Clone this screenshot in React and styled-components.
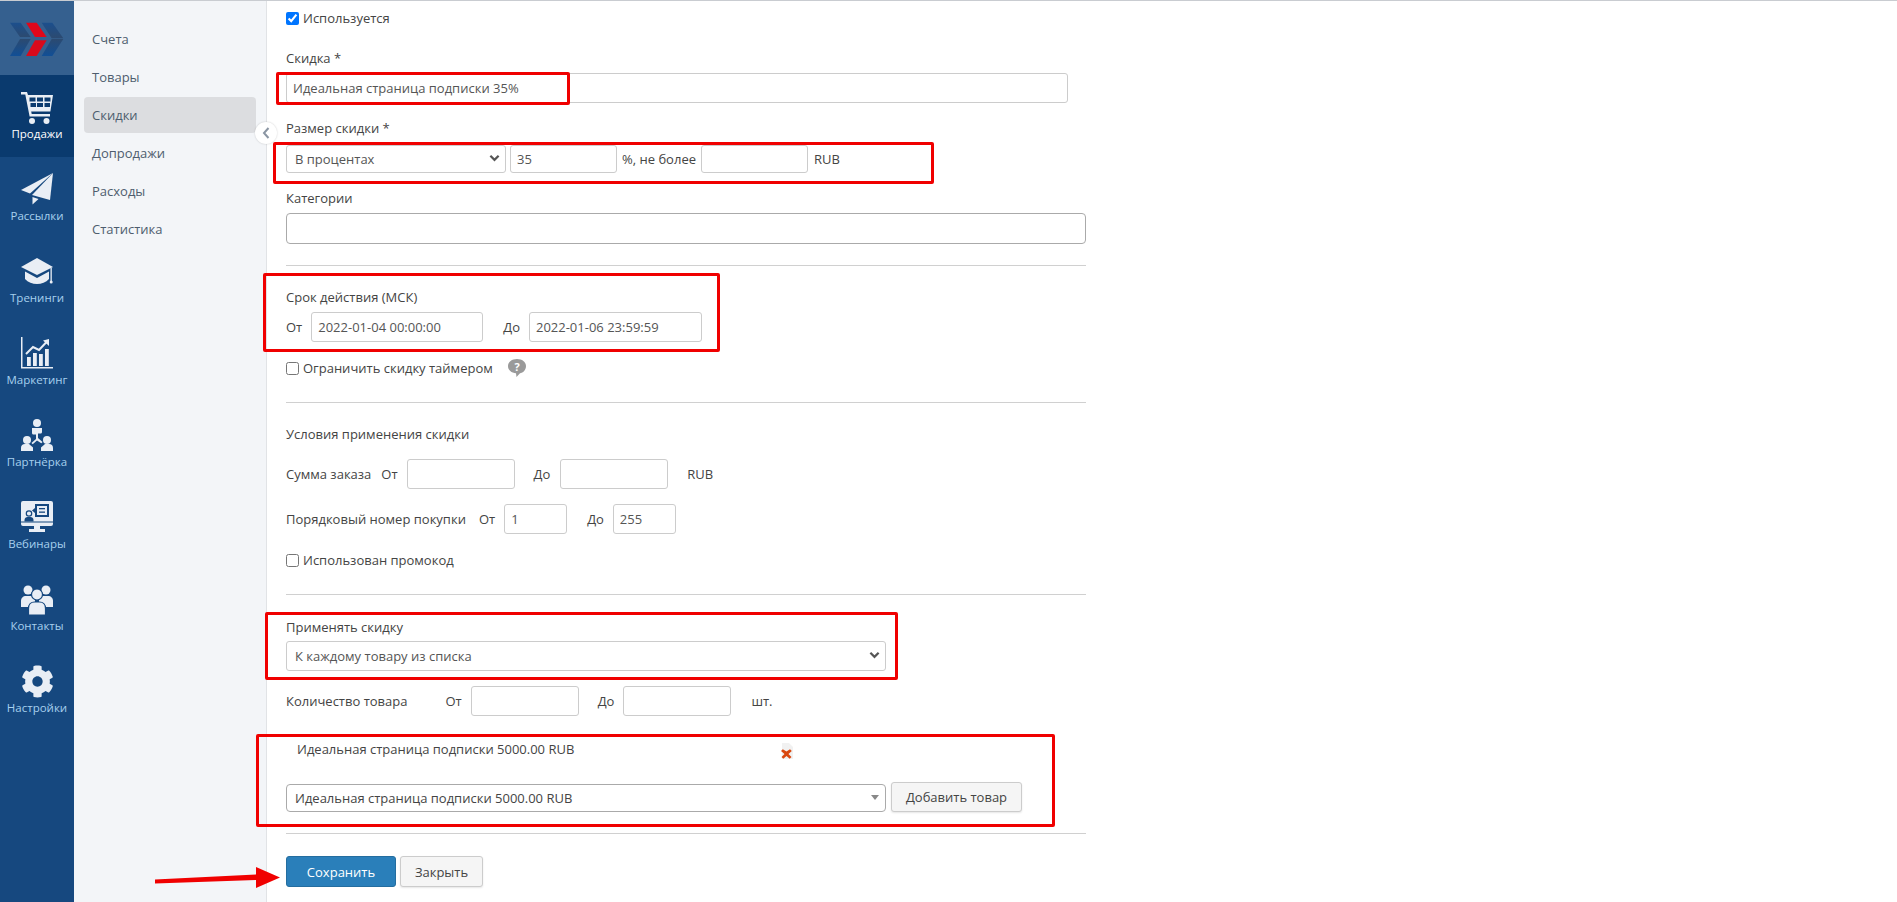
import React from 'react'
import styled, { createGlobalStyle } from 'styled-components'
import { FaCog } from 'react-icons/fa'

const GlobalStyle = createGlobalStyle`
  html, body {
    margin: 0;
    padding: 0;
    background: #fff;
    font-family: "Open Sans", "Liberation Sans", sans-serif;
    font-size: 13px;
    color: #444;
  }
  * { box-sizing: border-box; }
`

const Logo = () => (
  <svg width="74" height="75" viewBox="0 0 222 225">
    <defs>
      <linearGradient id="topBlue" x1="0" y1="0" x2="0" y2="1">
        <stop offset="0" stopColor="#1c4f8d" />
        <stop offset="1" stopColor="#2c4a70" />
      </linearGradient>
      <linearGradient id="botBlue" x1="0" y1="0" x2="0" y2="1">
        <stop offset="0" stopColor="#2c4a70" />
        <stop offset="1" stopColor="#114f96" />
      </linearGradient>
    </defs>
    <polygon points="30,65 62,65 92,108 60,108" fill="url(#topBlue)" />
    <polygon points="60,114 92,114 62,165 30,165" fill="url(#botBlue)" />
    <polygon points="125,65 157,65 190,112 155,112" fill="url(#topBlue)" />
    <polygon points="155,114 190,114 157,165 125,165" fill="url(#botBlue)" />
    <polygon points="78,65 110,65 140,108 105,108" fill="#e1071a" />
    <polygon points="105,118 140,118 110,165 78,165" fill="#d80a1c" />
  </svg>
)

const CartIcon = () => (
  <svg width="32" height="32" viewBox="0 0 32 32" fill="currentColor">
    <path d="M0 0h6l1 3h25l-2.6 16.5H10.2l.5 2.5H29v2.4H8.6L4.3 2.4H0z" />
    <g fill="#0a3a6e">
      <rect x="8.5" y="5.5" width="6" height="4" />
      <rect x="16" y="5.5" width="6" height="4" />
      <rect x="23.5" y="5.5" width="6" height="4" />
      <rect x="9.5" y="11" width="5.5" height="4" />
      <rect x="16" y="11" width="6" height="4" />
      <rect x="23.5" y="11" width="5.5" height="4" />
    </g>
    <circle cx="11" cy="29" r="3" />
    <circle cx="25.5" cy="29" r="3" />
  </svg>
)

const PlaneIcon = () => (
  <svg width="32" height="32" viewBox="0 0 32 32" fill="currentColor">
    <polygon points="32,0 0,17 9,20.5" />
    <polygon points="32,0 11,22 29,27" />
    <polygon points="11.5,24 11.5,31.5 17.5,26" />
  </svg>
)

const CapIcon = () => (
  <svg width="32" height="28" viewBox="0 0 32 28" fill="currentColor">
    <polygon points="0,9 16,0 32,9 16,17" />
    <path d="M4 13.5 16 20l12-6.5V21c-3 3.5-7.5 5-12 5s-9-1.500-12-5z" />
    <rect x="29.500" y="10" width="1.300" height="13" />
    <circle cx="30.200" cy="24" r="1.500" />
  </svg>
)

const ChartIcon = () => (
  <svg width="32" height="32" viewBox="0 0 32 32" fill="currentColor">
    <path d="M0 0h1.500v30H32v1.600H0z" />
    <rect x="6" y="20" width="3.800" height="9" />
    <rect x="12" y="16" width="3.800" height="13" />
    <rect x="18" y="17" width="3.800" height="12" />
    <rect x="24" y="12" width="3.800" height="17" />
    <path d="M5 17l7-7 6 3 8-8.500" fill="none" stroke="currentColor" strokeWidth="2" />
    <polygon points="28,2 28,9 22,3.500" />
  </svg>
)

const PartnerIcon = () => (
  <svg width="32" height="33" viewBox="0 0 32 33" fill="currentColor">
    <circle cx="16" cy="4" r="4" />
    <path d="M11 9h10v4c0 .8-.5 1.500-1.500 1.500H17v4.500l4.500 4-1.200 1.300L16 21.500l-4.300 3.800-1.200-1.300 4.500-4v-4.500h-2.500c-1 0-1.500-.7-1.500-1.500z" />
    <circle cx="6" cy="21" r="4" />
    <path d="M0 32v-3c0-2.500 1.500-4 4-4h4l4 3.500V32z" />
    <circle cx="26" cy="21" r="4" />
    <path d="M32 32v-3c0-2.500-1.500-4-4-4h-4l-4 3.500V32z" />
  </svg>
)

const WebinarIcon = () => (
  <svg width="32" height="32" viewBox="0 0 32 32">
    <path d="M2 0h28a2 2 0 0 1 2 2v21a2 2 0 0 1-2 2H19v3h5v3H8v-3h5v-3H2a2 2 0 0 1-2-2V2a2 2 0 0 1 2-2z" fill="currentColor" />
    <rect x="0" y="20.500" width="32" height="1" fill="#16487f" />
    <path d="M14 3h14v13H14v-4l-3-2.500 3-2.500z" fill="#16487f" />
    <path d="M16 5h10v9H16z" fill="currentColor" />
    <rect x="18" y="7" width="6" height="1.300" fill="#16487f" />
    <rect x="18" y="10.500" width="6" height="1.300" fill="#16487f" />
    <circle cx="8" cy="12.500" r="2.700" fill="none" stroke="#16487f" strokeWidth="1.200" />
    <path d="M3.500 20.500v-1.500c0-2 1.500-3 3-3h3c1.500 0 3 1 3 3v1.500z" fill="#16487f" />
  </svg>
)

const ContactsIcon = () => (
  <svg width="32" height="30" viewBox="0 0 32 30">
    <g fill="currentColor">
      <circle cx="7" cy="5" r="4.500" />
      <circle cx="25" cy="5" r="4.500" />
      <path d="M0 22v-6c0-3 2-5 5-5h4c3 0 5 2 5 5v6z" />
      <path d="M18 22v-6c0-3 2-5 5-5h4c3 0 5 2 5 5v6z" />
      <circle cx="16" cy="9.500" r="5.500" stroke="#16487f" strokeWidth="1.200" />
      <path d="M7.500 30v-6.500c0-4 2.500-6.500 6-6.500h5c3.500 0 6 2.500 6 6.500V30z" stroke="#16487f" strokeWidth="1.200" />
    </g>
  </svg>
)

const HelpBubble = () => (
  <svg width="18" height="18" viewBox="0 0 18 18">
    <path d="M9 0c5 0 9 2.800 9 7s-3 6.800-6 7.300L8.500 18l-.5-3.700C3.500 14 0 11.200 0 7s4-7 9-7z" fill="#9a9a9a" />
    <text x="9" y="11.500" textAnchor="middle" fontSize="11" fontWeight="700" fontFamily="Open Sans" fill="#fff">?</text>
  </svg>
)

const DeleteIcon = () => (
  <svg width="16" height="16" viewBox="0 0 16 16">
    <path d="M3 0h7l4 4v12H3z" fill="#f1f1f1" />
    <path d="M2 8l1.800-1.800L7.500 8.500 11 6.200 12.800 8 9.500 11l3 3-1.800 1.800L7.500 13l-3.200 2.800L2.500 14l3-3z" fill="#d9480f" />
  </svg>
)

const navItems = [
  { label: 'Продажи', icon: <CartIcon />, active: true, offset: 1 },
  { label: 'Рассылки', icon: <PlaneIcon />, offset: 0 },
  { label: 'Тренинги', icon: <CapIcon />, offset: 3 },
  { label: 'Маркетинг', icon: <ChartIcon />, offset: 0 },
  { label: 'Партнёрка', icon: <PartnerIcon />, offset: 0 },
  { label: 'Вебинары', icon: <WebinarIcon />, offset: 0 },
  { label: 'Контакты', icon: <ContactsIcon />, offset: 2 },
  { label: 'Настройки', icon: <FaCog size={33} />, offset: 0 },
]

const subItems = ['Счета', 'Товары', 'Скидки', 'Допродажи', 'Расходы', 'Статистика']

const SelectField = ({ value, width, height }) => (
  <SelectWrap $width={width}>
    <NativeSelect $height={height} defaultValue={value}>
      <option>{value}</option>
    </NativeSelect>
    <Chevron width="11" height="8" viewBox="0 0 12 8">
      <path d="M1.500 1.500 6 6l4.500-4.500" fill="none" stroke="#555" strokeWidth="2.400" />
    </Chevron>
  </SelectWrap>
)

const App = () => {
  return (
    <Page>
      <GlobalStyle />
      <Sidebar>
        <LogoBox><Logo /></LogoBox>
        {navItems.map((item) => (
          <NavItem key={item.label} $active={item.active}>
            <NavIcon $offset={item.offset}>{item.icon}</NavIcon>
            <NavLabel $active={item.active}>{item.label}</NavLabel>
          </NavItem>
        ))}
      </Sidebar>

      <SubMenu>
        {subItems.map((item) => (
          <SubItem key={item} $active={item === 'Скидки'}>{item}</SubItem>
        ))}
        <Collapse>
          <svg width="8" height="12" viewBox="0 0 8 12">
            <path d="M6.500 1 2 6l4.500 5" fill="none" stroke="#8a95a3" strokeWidth="2" />
          </svg>
        </Collapse>
      </SubMenu>

      <Main>
        <Form>
          <CheckRow $mt={7}>
            <Check type="checkbox" defaultChecked />
            Используется
          </CheckRow>

          <Label $mt={21}>Скидка *</Label>
          <TextInput $mt={6} $width={782} defaultValue="Идеальная страница подписки 35%" />

          <Label $mt={16}>Размер скидки *</Label>
          <Row $mt={8}>
            <SelectField value="В процентах" width={220} height={28} />
            <SmallInput $width={107} $ml={4} defaultValue="35" />
            <RowText $ml={5}>%, не более</RowText>
            <SmallInput $width={107} $ml={5} />
            <RowText $ml={6}>RUB</RowText>
          </Row>

          <Label $mt={16}>Категории</Label>
          <CategoryBox $mt={6} />

          <Divider $mt={21} />

          <Label $mt={22}>Срок действия (МСК)</Label>
          <Row $mt={6}>
            <RowText>От</RowText>
            <TextInput $width={172} $ml={9} defaultValue="2022-01-04 00:00:00" />
            <RowText $ml={20}>До</RowText>
            <TextInput $width={173} $ml={9} defaultValue="2022-01-06 23:59:59" />
          </Row>

          <CheckRow $mt={16}>
            <Check type="checkbox" />
            Ограничить скидку таймером
            <HelpWrap><HelpBubble /></HelpWrap>
          </CheckRow>

          <Divider $mt={24} />

          <Label $mt={22}>Условия применения скидки</Label>
          <Row $mt={16}>
            <RowText>Сумма заказа</RowText>
            <RowText $ml={10}>От</RowText>
            <TextInput $width={108} $ml={9} />
            <RowText $ml={19}>До</RowText>
            <TextInput $width={108} $ml={10} />
            <RowText $ml={19}>RUB</RowText>
          </Row>
          <Row $mt={15}>
            <RowText>Порядковый номер покупки</RowText>
            <RowText $ml={13}>От</RowText>
            <TextInput $width={63} $ml={9} defaultValue="1" />
            <RowText $ml={20}>До</RowText>
            <TextInput $width={63} $ml={9} defaultValue="255" />
          </Row>

          <CheckRow $mt={16}>
            <Check type="checkbox" />
            Использован промокод
          </CheckRow>

          <Divider $mt={24} />

          <Label $mt={23}>Применять скидку</Label>
          <SelectRow $mt={5}>
            <SelectField value="К каждому товару из списка" width={600} height={30} />
          </SelectRow>

          <Row $mt={15}>
            <RowText>Количество товара</RowText>
            <RowText $ml={38}>От</RowText>
            <TextInput $width={108} $ml={9} />
            <RowText $ml={19}>До</RowText>
            <TextInput $width={108} $ml={9} />
            <RowText $ml={20}>шт.</RowText>
          </Row>

          <ProductRow>
            <span>Идеальная страница подписки 5000.00 RUB</span>
            <DeleteWrap><DeleteIcon /></DeleteWrap>
          </ProductRow>

          <AddRow>
            <ProductSelect>
              Идеальная страница подписки 5000.00 RUB
              <Caret />
            </ProductSelect>
            <AddButton type="button">Добавить товар</AddButton>
          </AddRow>

          <Divider $mt={21} />

          <Buttons>
            <SaveButton type="button">Сохранить</SaveButton>
            <CloseButton type="button">Закрыть</CloseButton>
          </Buttons>
        </Form>
      </Main>

      <RedFrame $x={276} $y={72} $w={294} $h={33} />
      <RedFrame $x={273} $y={142} $w={661} $h={42} />
      <RedFrame $x={263} $y={273} $w={457} $h={79} />
      <RedFrame $x={265} $y={612} $w={633} $h={68} />
      <RedFrame $x={256} $y={734} $w={799} $h={93} />
      <Arrow width="136" height="28" viewBox="0 0 136 28">
        <path d="M5 17.500 106 12.500V5l24 10.500L106 26v-8L5 21.500z" fill="#f00000" />
      </Arrow>
    </Page>
  )
}

const Page = styled.div`
  position: relative;
  display: flex;
  height: 902px;
  overflow: hidden;
  border-top: 1px solid #c9ccd1;
`

const Sidebar = styled.nav`
  width: 74px;
  flex: none;
  background: #16487f;
  display: flex;
  flex-direction: column;
`

const LogoBox = styled.div`
  height: 74px;
  background: #35608f;
  overflow: hidden;
`

const NavItem = styled.div`
  height: 82px;
  display: flex;
  flex-direction: column;
  align-items: center;
  padding-top: 16px;
  background: ${(p) => (p.$active ? '#0a3a6e' : 'transparent')};
`

const NavIcon = styled.div`
  height: 33px;
  padding-top: ${(p) => p.$offset}px;
  display: flex;
  align-items: flex-start;
  justify-content: center;
  color: #e9eef5;
`

const NavLabel = styled.div`
  margin-top: 2px;
  font-size: 11.500px;
  line-height: 16px;
  white-space: nowrap;
  color: ${(p) => (p.$active ? '#ffffff' : '#a6d0ee')};
`

const SubMenu = styled.aside`
  position: relative;
  width: 193px;
  flex: none;
  background: #f3f5f8;
  border-right: 1px solid #e1e3e6;
  padding: 20px 10px 0;
  display: flex;
  flex-direction: column;
  gap: 2px;
`

const SubItem = styled.div`
  height: 36px;
  padding-left: 8px;
  line-height: 36px;
  font-size: 13px;
  color: #4e5d6e;
  border-radius: 4px;
  background: ${(p) => (p.$active ? '#dcdde0' : 'transparent')};
`

const Collapse = styled.div`
  position: absolute;
  right: -11px;
  top: 121px;
  width: 22px;
  height: 22px;
  border-radius: 50%;
  background: #fff;
  box-shadow: 0 0 2px rgba(0, 0, 0, 0.2);
  display: flex;
  align-items: center;
  justify-content: center;
`

const Main = styled.main`
  flex: 1;
  padding-left: 19px;
`

const Form = styled.form`
  width: 800px;
  display: flex;
  flex-direction: column;
  align-items: flex-start;
`

const Label = styled.div`
  margin-top: ${(p) => p.$mt}px;
  height: 18px;
  line-height: 18px;
  font-size: 13px;
  color: #444;
`

const controlStyles = `
  height: 30px;
  padding: 0 6px;
  border: 1px solid #ccc;
  border-radius: 3px;
  background: #fff;
  font-family: "Open Sans", "Liberation Sans", sans-serif;
  font-size: 13px;
  color: #555;
  outline: none;
`

const TextInput = styled.input`
  ${controlStyles}
  flex: none;
  width: ${(p) => p.$width}px;
  margin-top: ${(p) => p.$mt || 0}px;
  margin-left: ${(p) => p.$ml || 0}px;
`

const SmallInput = styled(TextInput)`
  height: 28px;
`

const CategoryBox = styled.div`
  width: 800px;
  height: 31px;
  margin-top: ${(p) => p.$mt}px;
  border: 1px solid #aaa;
  border-radius: 4px;
  background: #fff;
`

const Row = styled.div`
  display: flex;
  align-items: center;
  margin-top: ${(p) => p.$mt}px;
`

const SelectRow = styled(Row)``

const RowText = styled.span`
  margin-left: ${(p) => p.$ml || 0}px;
  white-space: nowrap;
  color: #444;
`

const SelectWrap = styled.div`
  position: relative;
  flex: none;
  width: ${(p) => p.$width}px;
`

const NativeSelect = styled.select`
  ${controlStyles}
  display: block;
  width: 100%;
  height: ${(p) => p.$height}px;
  padding: 0 8px;
  appearance: none;
`

const Chevron = styled.svg`
  position: absolute;
  right: 6px;
  top: 50%;
  margin-top: -5px;
`

const CheckRow = styled.label`
  display: flex;
  align-items: center;
  height: 20px;
  margin-top: ${(p) => p.$mt}px;
  color: #444;
`

const Check = styled.input`
  width: 13px;
  height: 13px;
  margin: 0 4px 0 0;
  accent-color: #0075ff;
`

const HelpWrap = styled.span`
  display: flex;
  margin-left: 15px;
`

const Divider = styled.div`
  width: 800px;
  height: 1px;
  background: #d0d0d0;
  margin-top: ${(p) => p.$mt}px;
`

const ProductRow = styled.div`
  display: flex;
  align-items: center;
  height: 18px;
  margin-top: 24px;
  padding-left: 11px;
  color: #444;
`

const DeleteWrap = styled.span`
  display: flex;
  margin-left: 205px;
  margin-top: 4px;
`

const AddRow = styled.div`
  display: flex;
  align-items: flex-end;
  gap: 5px;
  margin-top: 24px;
`

const ProductSelect = styled.div`
  position: relative;
  width: 600px;
  height: 28px;
  padding-left: 8px;
  line-height: 26px;
  border: 1px solid #aaa;
  border-radius: 4px;
  background: #fff;
  color: #444;
`

const Caret = styled.span`
  position: absolute;
  right: 6px;
  top: 10px;
  border-left: 4px solid transparent;
  border-right: 4px solid transparent;
  border-top: 5px solid #888;
`

const buttonStyles = `
  font-family: "Open Sans", "Liberation Sans", sans-serif;
  font-size: 13px;
  border-radius: 3px;
  cursor: pointer;
`

const AddButton = styled.button`
  ${buttonStyles}
  width: 131px;
  height: 30px;
  padding: 0;
  color: #444;
  background: #f5f5f5;
  border: 1px solid #ccc;
  box-shadow: 0 1px 2px rgba(0, 0, 0, 0.1);
`

const Buttons = styled.div`
  display: flex;
  gap: 4px;
  margin-top: 22px;
`

const SaveButton = styled.button`
  ${buttonStyles}
  width: 110px;
  height: 31px;
  padding: 0;
  color: #fff;
  background: #2a7fba;
  border: 1px solid #246d9f;
`

const CloseButton = styled.button`
  ${buttonStyles}
  width: 83px;
  height: 31px;
  padding: 0;
  color: #444;
  background: #f5f5f5;
  border: 1px solid #ccc;
  box-shadow: 0 1px 2px rgba(0, 0, 0, 0.1);
`

const RedFrame = styled.div`
  position: absolute;
  left: ${(p) => p.$x}px;
  top: ${(p) => p.$y - 1}px;
  width: ${(p) => p.$w}px;
  height: ${(p) => p.$h}px;
  border: 3px solid #f00000;
  border-radius: 2px;
  pointer-events: none;
`

const Arrow = styled.svg`
  position: absolute;
  left: 150px;
  top: 861px;
`

export default App
